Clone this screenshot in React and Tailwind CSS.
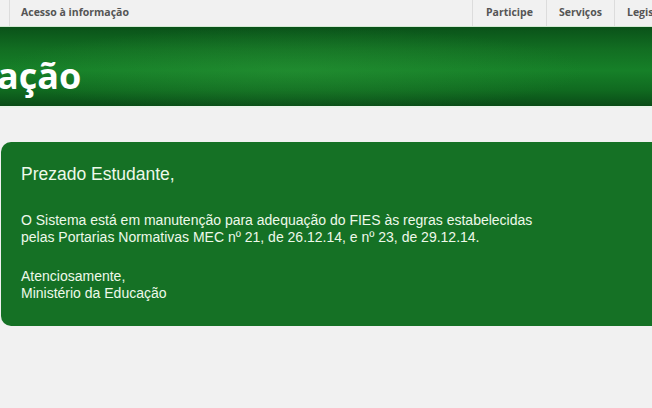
export default function App() {
  return (
    <div className="h-[408px] w-[652px] overflow-hidden bg-[#f1f1f1]">
      {/* barra do governo */}
      <div className="flex h-[27px] items-stretch overflow-hidden border-b border-[#d3e9d3] bg-[#f1f1f1] font-['Open_Sans',sans-serif] text-[10.5px] font-bold text-[#555]">
        <div className="ml-[9px] flex w-[463px] shrink-0 items-center border-l border-[#dcdcdc] pl-[11px]">
          Acesso à informação
        </div>
        <div className="flex shrink-0 items-stretch">
          <div className="flex items-center border-l border-[#dcdcdc] px-[13px]">Participe</div>
          <div className="flex items-center border-l border-[#dcdcdc] px-[12px]">Serviços</div>
          <div className="flex items-center whitespace-nowrap border-l border-[#dcdcdc] pl-[12px]">Legislação</div>
        </div>
      </div>

      {/* faixa verde */}
      <div className="h-[81px] border-b-2 border-[#e9f3e9] bg-[linear-gradient(180deg,#0a5219_0%,#126e22_28%,#168028_55%,#106a20_80%,#0a4c17_100%)]">
        <div className="flex h-full items-center bg-[radial-gradient(ellipse_45%_55%_at_45%_55%,rgba(50,160,60,0.35),transparent)] pt-[18px] font-['Open_Sans',sans-serif] text-[36px] font-bold leading-none text-white">
          <span className="-ml-[3px]">ação</span>
        </div>
      </div>

      {/* aviso */}
      <div className="ml-px mr-[-12px] mt-[34px] rounded-[10px] bg-[#157125] pb-[24px] pl-[20px] pt-[21px] font-['Liberation_Sans',Arial,sans-serif] text-[#eef9ea]">
        <p className="text-[17.5px] leading-[22px]">Prezado Estudante,</p>
        <p className="mt-[27px] text-[14px] leading-[17px]">
          O Sistema está em manutenção para adequação do FIES às regras estabelecidas
          <br />
          pelas Portarias Normativas MEC nº 21, de 26.12.14, e nº 23, de 29.12.14.
        </p>
        <p className="mt-[22px] text-[14px] leading-[17px]">
          Atenciosamente,
          <br />
          Ministério da Educação
        </p>
      </div>
    </div>
  )
}
